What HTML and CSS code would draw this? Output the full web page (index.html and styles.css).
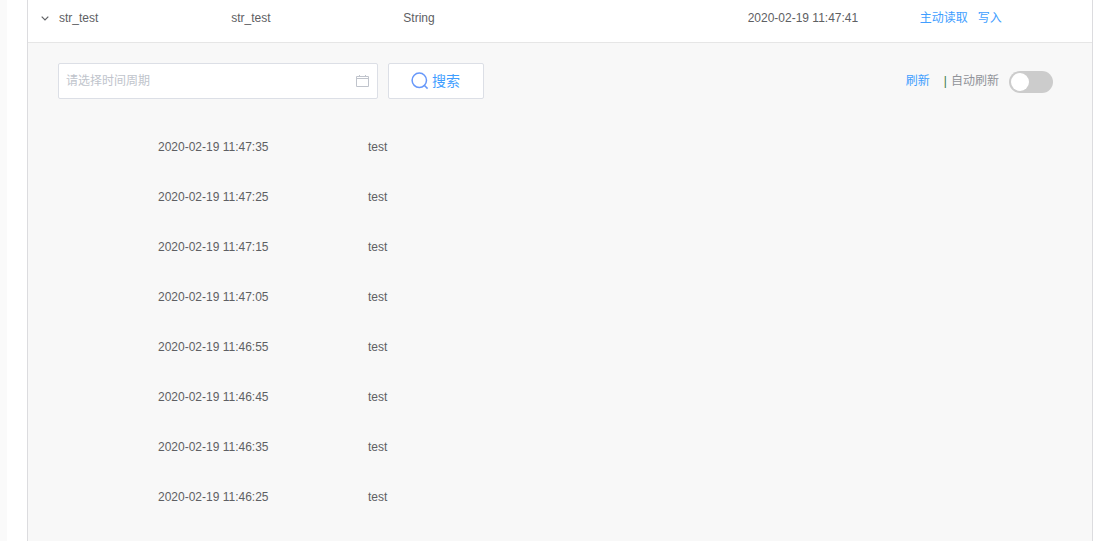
FILE: index.html
```html
<!DOCTYPE html>
<html lang="zh-CN">
<head>
<meta charset="utf-8">
<title>str_test</title>
<link rel="stylesheet" href="styles.css">
</head>
<body>
<div class="page">
  <main class="panel">
    <table class="props">
      <tbody>
        <tr>
          <td class="toggle-cell"><button class="expand" type="button" aria-label="收起" aria-expanded="true"><svg width="8" height="5" viewBox="0 0 8 5"><path d="M.7.7 4 4 7.3.7" fill="none" stroke="currentColor" stroke-width="1.2"/></svg></button></td>
          <td>str_test</td>
          <td>str_test</td>
          <td>String</td>
          <td></td>
          <td>2020-02-19 11:47:41</td>
          <td><div class="actions"><a href="#read">主动读取</a><a href="#write">写入</a></div></td>
        </tr>
      </tbody>
    </table>
    <section class="detail">
      <div class="toolbar">
        <div class="period">
          <input type="text" placeholder="请选择时间周期" aria-label="请选择时间周期">
          <svg width="14" height="14" viewBox="0 0 14 14" fill="none" stroke="currentColor"><path d="M1.5 2.5h12v10h-12zM1.5 4.5h12M4.5 1v2M10.5 1v2"/></svg>
        </div>
        <button class="search" type="button"><svg width="18" height="18" viewBox="0 0 18 18" fill="none" stroke="#6798fa" stroke-width="1.5"><circle cx="8.3" cy="8.3" r="7.2"/><path d="m13.2 13.2 3.4 3.4"/></svg>搜索</button>
        <div class="refresh">
          <a href="#refresh">刷新</a>
          <span class="bar">|</span>
          <label for="auto">自动刷新</label>
          <input class="switch" id="auto" type="checkbox" role="switch">
        </div>
      </div>
      <table class="history">
        <tbody>
          <tr><td>2020-02-19 11:47:35</td><td>test</td></tr>
          <tr><td>2020-02-19 11:47:25</td><td>test</td></tr>
          <tr><td>2020-02-19 11:47:15</td><td>test</td></tr>
          <tr><td>2020-02-19 11:47:05</td><td>test</td></tr>
          <tr><td>2020-02-19 11:46:55</td><td>test</td></tr>
          <tr><td>2020-02-19 11:46:45</td><td>test</td></tr>
          <tr><td>2020-02-19 11:46:35</td><td>test</td></tr>
          <tr><td>2020-02-19 11:46:25</td><td>test</td></tr>
        </tbody>
      </table>
    </section>
  </main>
</div>
</body>
</html>
```
FILE: styles.css
```css
* { box-sizing: border-box; }
body {
  margin: 0;
  background: #fff;
  color: #5e6063;
  font: 12px/18px "Liberation Sans", "Noto Sans CJK SC", sans-serif;
}
input, button { font: inherit; }
a { color: #409eff; text-decoration: none; }
table { border-spacing: 0; table-layout: fixed; }

.page {
  display: flex;
  min-height: 100vh;
  padding: 0 1px 0 20px;
  border-left: 7px solid #fafafa;
}
.panel {
  flex: 1;
  display: flex;
  flex-direction: column;
  border: solid #dcdcdf;
  border-width: 0 1px;
}

.props { width: 100%; }
.props td {
  height: 43px;
  padding: 0 0 6px;
  border-bottom: 1px solid #e6e6e6;
}
.props .toggle-cell { width: 31px; }
.expand {
  display: flex;
  align-items: center;
  height: 18px;
  padding: 0;
  margin-left: 13px;
  border: 0;
  background: none;
  color: #606266;
}
.actions { display: flex; gap: 10px; }

.detail {
  flex: 1;
  padding: 20px 39px 19px 30px;
  background: #f8f8f8;
}
.toolbar { display: flex; gap: 10px; }
.period {
  display: flex;
  align-items: center;
  width: 320px;
  height: 36px;
  padding: 0 8px 0 7px;
  background: #fff;
  border: 1px solid #dcdfe6;
  border-radius: 2px;
  color: #c0c4cc;
}
.period input {
  flex: 1;
  min-width: 0;
  padding: 0;
  border: 0;
  outline: 0;
  background: none;
  color: #606266;
}
.period input::placeholder { color: #c0c4cc; opacity: 1; }
.search {
  display: flex;
  align-items: center;
  justify-content: center;
  gap: 3px;
  width: 96px;
  height: 36px;
  padding: 0 1px 0 0;
  background: #fff;
  border: 1px solid #dcdfe6;
  border-radius: 2px;
  color: #409eff;
  font-size: 14px;
}
.refresh {
  display: flex;
  align-items: center;
  margin-left: auto;
  color: #909399;
}
.bar { margin: 0 4px 0 14px; color: #3f7a3f; }
.switch {
  display: flex;
  appearance: none;
  width: 44px;
  height: 22px;
  padding: 2px;
  margin: 2px 0 0 10px;
  border-radius: 11px;
  background: #ccc;
}
.switch::before {
  content: "";
  width: 18px;
  height: 18px;
  border-radius: 50%;
  background: #fff;
}
.switch:checked { justify-content: flex-end; background: #409eff; }

.history { width: 420px; margin: 23px 0 0 90px; }
.history td { height: 50px; padding: 0 10px; }
```
